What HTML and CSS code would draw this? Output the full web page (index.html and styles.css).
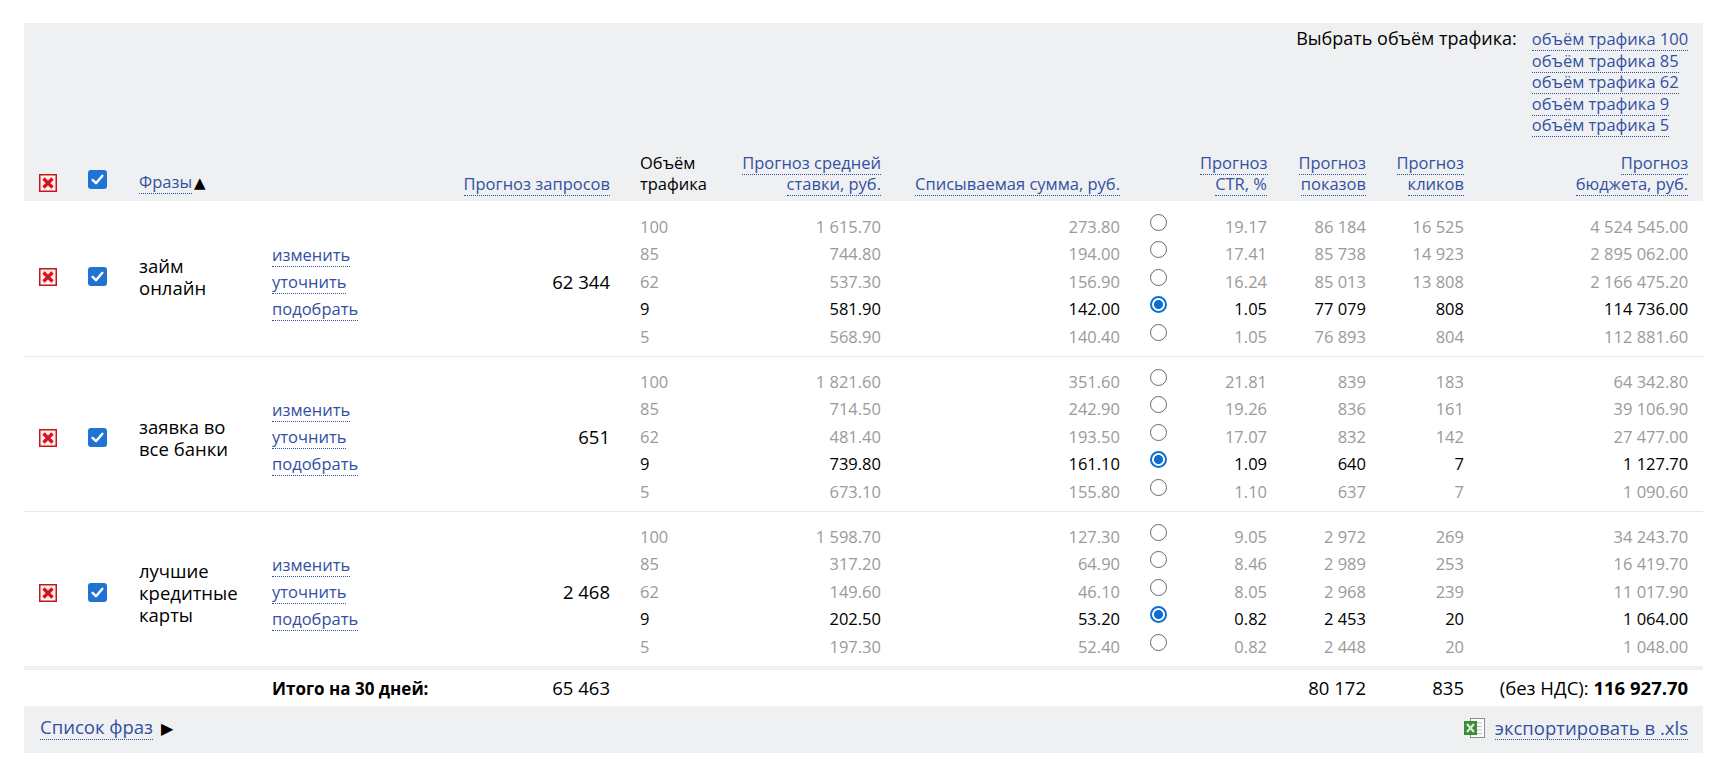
FILE: index.html
```html
<!DOCTYPE html>
<html lang="ru">
<head>
<meta charset="utf-8">
<title>Прогноз бюджета</title>
<link rel="stylesheet" href="styles.css">
</head>
<body>
<div class="wrap">
<table class="fc">
<colgroup>
<col class="w1"><col class="w2"><col class="w3"><col class="w4"><col class="w5"><col class="w6"><col class="w7"><col class="w8"><col class="w9"><col class="w10"><col class="w11"><col class="w12"><col class="w13">
</colgroup>
<thead>
<tr class="top">
<th colspan="13">
<div class="pick">
<span class="pick-label">Выбрать объём трафика:</span>
<div class="pick-list">
<div><a class="dl" href="#">объём трафика 100</a></div>
<div><a class="dl" href="#">объём трафика 85</a></div>
<div><a class="dl" href="#">объём трафика 62</a></div>
<div><a class="dl" href="#">объём трафика 9</a></div>
<div><a class="dl" href="#">объём трафика 5</a></div>
</div>
</div>
</th>
</tr>
<tr class="heads">
<th class="c-x"><svg class="ico-x" viewBox="0 0 18 18" width="18" height="18"><rect x="0.75" y="0.75" width="16.5" height="16.5" fill="#fbeeee" stroke="#c8161d" stroke-width="1.5"/><path d="M4.5 4.5 L13.5 13.5 M13.5 4.5 L4.5 13.5" stroke="#d4141b" stroke-width="3.2"/></svg></th>
<th class="c-cb"><svg class="ico-cb" viewBox="0 0 19 19" width="19" height="19"><rect x="0" y="0" width="19" height="19" rx="3" fill="#1f74d3"/><path d="M4.6 9.9 L8 13.2 L14.4 5.8" fill="none" stroke="#fff" stroke-width="2.4" stroke-linecap="round" stroke-linejoin="round"/></svg></th>
<th class="c-ph"><a class="dl" href="#">Фразы</a><span class="tri">▲</span></th>
<th class="c-ln"></th>
<th class="c-rq"><a class="dl" href="#">Прогноз запросов</a></th>
<th class="c-vol">Объём<br>трафика</th>
<th class="c-bid"><a class="dl" href="#">Прогноз средней<br>ставки, руб.</a></th>
<th class="c-sum"><a class="dl" href="#">Списываемая сумма, руб.</a></th>
<th class="c-rad"></th>
<th class="c-ctr"><a class="dl" href="#">Прогноз<br>CTR, %</a></th>
<th class="c-sh"><a class="dl" href="#">Прогноз<br>показов</a></th>
<th class="c-cl"><a class="dl" href="#">Прогноз<br>кликов</a></th>
<th class="c-bud"><a class="dl" href="#">Прогноз<br>бюджета, руб.</a></th>
</tr>
</thead>
<tbody>
<tr class="r">
<td class="c-x"><svg class="ico-x" viewBox="0 0 18 18" width="18" height="18"><rect x="0.75" y="0.75" width="16.5" height="16.5" fill="#fbeeee" stroke="#c8161d" stroke-width="1.5"/><path d="M4.5 4.5 L13.5 13.5 M13.5 4.5 L4.5 13.5" stroke="#d4141b" stroke-width="3.2"/></svg></td>
<td class="c-cb"><svg class="ico-cb" viewBox="0 0 19 19" width="19" height="19"><rect x="0" y="0" width="19" height="19" rx="3" fill="#1f74d3"/><path d="M4.6 9.9 L8 13.2 L14.4 5.8" fill="none" stroke="#fff" stroke-width="2.4" stroke-linecap="round" stroke-linejoin="round"/></svg></td>
<td class="c-ph">займ<br>онлайн</td>
<td class="c-ln"><div><a class="dl" href="#">изменить</a></div><div><a class="dl" href="#">уточнить</a></div><div><a class="dl" href="#">подобрать</a></div></td>
<td class="c-rq">62&nbsp;344</td>
<td class="c-vol"><div class="v">100</div><div class="v">85</div><div class="v">62</div><div class="v sel">9</div><div class="v">5</div></td>
<td class="c-bid"><div class="v">1&nbsp;615.70</div><div class="v">744.80</div><div class="v">537.30</div><div class="v sel">581.90</div><div class="v">568.90</div></td>
<td class="c-sum"><div class="v">273.80</div><div class="v">194.00</div><div class="v">156.90</div><div class="v sel">142.00</div><div class="v">140.40</div></td>
<td class="c-rad"><div class="rl"><span class="rb"></span></div><div class="rl"><span class="rb"></span></div><div class="rl"><span class="rb"></span></div><div class="rl"><span class="rb on"></span></div><div class="rl"><span class="rb"></span></div></td>
<td class="c-ctr"><div class="v">19.17</div><div class="v">17.41</div><div class="v">16.24</div><div class="v sel">1.05</div><div class="v">1.05</div></td>
<td class="c-sh"><div class="v">86&nbsp;184</div><div class="v">85&nbsp;738</div><div class="v">85&nbsp;013</div><div class="v sel">77&nbsp;079</div><div class="v">76&nbsp;893</div></td>
<td class="c-cl"><div class="v">16&nbsp;525</div><div class="v">14&nbsp;923</div><div class="v">13&nbsp;808</div><div class="v sel">808</div><div class="v">804</div></td>
<td class="c-bud"><div class="v">4&nbsp;524&nbsp;545.00</div><div class="v">2&nbsp;895&nbsp;062.00</div><div class="v">2&nbsp;166&nbsp;475.20</div><div class="v sel">114&nbsp;736.00</div><div class="v">112&nbsp;881.60</div></td>
</tr>
<tr class="r">
<td class="c-x"><svg class="ico-x" viewBox="0 0 18 18" width="18" height="18"><rect x="0.75" y="0.75" width="16.5" height="16.5" fill="#fbeeee" stroke="#c8161d" stroke-width="1.5"/><path d="M4.5 4.5 L13.5 13.5 M13.5 4.5 L4.5 13.5" stroke="#d4141b" stroke-width="3.2"/></svg></td>
<td class="c-cb"><svg class="ico-cb" viewBox="0 0 19 19" width="19" height="19"><rect x="0" y="0" width="19" height="19" rx="3" fill="#1f74d3"/><path d="M4.6 9.9 L8 13.2 L14.4 5.8" fill="none" stroke="#fff" stroke-width="2.4" stroke-linecap="round" stroke-linejoin="round"/></svg></td>
<td class="c-ph">заявка во<br>все банки</td>
<td class="c-ln"><div><a class="dl" href="#">изменить</a></div><div><a class="dl" href="#">уточнить</a></div><div><a class="dl" href="#">подобрать</a></div></td>
<td class="c-rq">651</td>
<td class="c-vol"><div class="v">100</div><div class="v">85</div><div class="v">62</div><div class="v sel">9</div><div class="v">5</div></td>
<td class="c-bid"><div class="v">1&nbsp;821.60</div><div class="v">714.50</div><div class="v">481.40</div><div class="v sel">739.80</div><div class="v">673.10</div></td>
<td class="c-sum"><div class="v">351.60</div><div class="v">242.90</div><div class="v">193.50</div><div class="v sel">161.10</div><div class="v">155.80</div></td>
<td class="c-rad"><div class="rl"><span class="rb"></span></div><div class="rl"><span class="rb"></span></div><div class="rl"><span class="rb"></span></div><div class="rl"><span class="rb on"></span></div><div class="rl"><span class="rb"></span></div></td>
<td class="c-ctr"><div class="v">21.81</div><div class="v">19.26</div><div class="v">17.07</div><div class="v sel">1.09</div><div class="v">1.10</div></td>
<td class="c-sh"><div class="v">839</div><div class="v">836</div><div class="v">832</div><div class="v sel">640</div><div class="v">637</div></td>
<td class="c-cl"><div class="v">183</div><div class="v">161</div><div class="v">142</div><div class="v sel">7</div><div class="v">7</div></td>
<td class="c-bud"><div class="v">64&nbsp;342.80</div><div class="v">39&nbsp;106.90</div><div class="v">27&nbsp;477.00</div><div class="v sel">1&nbsp;127.70</div><div class="v">1&nbsp;090.60</div></td>
</tr>
<tr class="r">
<td class="c-x"><svg class="ico-x" viewBox="0 0 18 18" width="18" height="18"><rect x="0.75" y="0.75" width="16.5" height="16.5" fill="#fbeeee" stroke="#c8161d" stroke-width="1.5"/><path d="M4.5 4.5 L13.5 13.5 M13.5 4.5 L4.5 13.5" stroke="#d4141b" stroke-width="3.2"/></svg></td>
<td class="c-cb"><svg class="ico-cb" viewBox="0 0 19 19" width="19" height="19"><rect x="0" y="0" width="19" height="19" rx="3" fill="#1f74d3"/><path d="M4.6 9.9 L8 13.2 L14.4 5.8" fill="none" stroke="#fff" stroke-width="2.4" stroke-linecap="round" stroke-linejoin="round"/></svg></td>
<td class="c-ph">лучшие<br>кредитные<br>карты</td>
<td class="c-ln"><div><a class="dl" href="#">изменить</a></div><div><a class="dl" href="#">уточнить</a></div><div><a class="dl" href="#">подобрать</a></div></td>
<td class="c-rq">2&nbsp;468</td>
<td class="c-vol"><div class="v">100</div><div class="v">85</div><div class="v">62</div><div class="v sel">9</div><div class="v">5</div></td>
<td class="c-bid"><div class="v">1&nbsp;598.70</div><div class="v">317.20</div><div class="v">149.60</div><div class="v sel">202.50</div><div class="v">197.30</div></td>
<td class="c-sum"><div class="v">127.30</div><div class="v">64.90</div><div class="v">46.10</div><div class="v sel">53.20</div><div class="v">52.40</div></td>
<td class="c-rad"><div class="rl"><span class="rb"></span></div><div class="rl"><span class="rb"></span></div><div class="rl"><span class="rb"></span></div><div class="rl"><span class="rb on"></span></div><div class="rl"><span class="rb"></span></div></td>
<td class="c-ctr"><div class="v">9.05</div><div class="v">8.46</div><div class="v">8.05</div><div class="v sel">0.82</div><div class="v">0.82</div></td>
<td class="c-sh"><div class="v">2&nbsp;972</div><div class="v">2&nbsp;989</div><div class="v">2&nbsp;968</div><div class="v sel">2&nbsp;453</div><div class="v">2&nbsp;448</div></td>
<td class="c-cl"><div class="v">269</div><div class="v">253</div><div class="v">239</div><div class="v sel">20</div><div class="v">20</div></td>
<td class="c-bud"><div class="v">34&nbsp;243.70</div><div class="v">16&nbsp;419.70</div><div class="v">11&nbsp;017.90</div><div class="v sel">1&nbsp;064.00</div><div class="v">1&nbsp;048.00</div></td>
</tr>
<tr class="total">
<td></td><td></td><td></td>
<td class="c-ln"><b class="tot-label">Итого на 30 дней:</b></td>
<td class="c-rq">65&nbsp;463</td>
<td></td><td></td><td></td><td></td><td></td>
<td class="c-sh">80&nbsp;172</td>
<td class="c-cl">835</td>
<td class="c-bud">(без НДС): <b class="tot-sum">116&nbsp;927.70</b></td>
</tr>
</tbody>
</table>
<div class="foot">
<div class="list"><a class="dl" href="#">Список фраз</a><span class="tri">▶</span></div>
<div class="xls">
<svg class="ico-xls" viewBox="0 0 21 20" width="21" height="20"><rect x="6.5" y="0.5" width="14" height="19" fill="#fff" stroke="#8a8f8a"/><path d="M10 5h8M10 8.5h8M10 12h8M10 15.5h8" stroke="#bccabc" stroke-width="1"/><rect x="0" y="3" width="13" height="14" fill="#3d8c3d"/><path d="M3 6 L10 14 M10 6 L3 14" stroke="#d8efcf" stroke-width="2.2"/></svg>
<a class="dl" href="#">экспортировать в .xls</a>
</div>
</div>
</div>
</body>
</html>
```

FILE: styles.css
```css
body {
  margin: 0;
  background: #fff;
  color: #000;
  font-family: "Open Sans", "Noto Sans", sans-serif;
  font-size: 16.5px;
}

.wrap {
  padding: 23px 24px;
}

a.dl {
  color: #3350a2;
  text-decoration: none;
  border-bottom: 1px dotted #3350a2;
}

.tri {
  font-family: "DejaVu Sans", sans-serif;
  font-size: 15px;
  margin-left: 2px;
}

table.fc {
  width: 1679px;
  table-layout: fixed;
  border-collapse: collapse;
}

.w1 { width: 49px; }
.w2 { width: 52px; }
.w3 { width: 147px; }
.w4 { width: 168px; }
.w5 { width: 170px; }
.w6 { width: 105px; }
.w7 { width: 166px; }
.w8 { width: 239px; }
.w9 { width: 80px; }
.w10 { width: 67px; }
.w11 { width: 99px; }
.w12 { width: 98px; }
.w13 { width: 239px; }

th, td {
  padding: 0;
  font-weight: normal;
  text-align: left;
  vertical-align: top;
}

thead {
  background: #eff0f2;
}

tr.top th {
  padding: 5px 15px 0 0;
}

.pick {
  display: flex;
  justify-content: flex-end;
  gap: 15px;
  line-height: 21.5px;
}

.pick-label {
  font-size: 18px;
}

.pick-list {
  display: flex;
  flex-direction: column;
  align-items: flex-start;
}

tr.heads th {
  padding-top: 16px;
  padding-bottom: 6px;
  vertical-align: bottom;
  line-height: 21.5px;
}

svg { display: block; }

tr.heads th.c-x { padding-bottom: 9px; }
tr.heads th.c-cb { padding-bottom: 12px; }

.c-x { padding-left: 15px; }
.c-cb { padding-left: 15px; }
.c-ph { padding-left: 14px; white-space: nowrap; }
.c-rq, .c-bid, .c-sum, .c-ctr, .c-sh, .c-cl, .c-bud { text-align: right; }
th.c-rq, th.c-bid, th.c-sum, th.c-ctr, th.c-sh, th.c-cl, th.c-bud { text-align: right; }
.c-vol { padding-left: 30px; }
.c-rad { padding-left: 30px; }
.c-bud { padding-right: 15px; }

tr.r td {
  padding-top: 12px;
  padding-bottom: 5.5px;
  white-space: nowrap;
}

tr.r + tr.r td {
  border-top: 1px solid #e7e8ea;
  padding-top: 11px;
}

tr.r td.c-x,
tr.r td.c-cb,
tr.r td.c-ph {
  padding-top: 0;
  padding-bottom: 3px;
  vertical-align: middle;
}

tr.r td.c-ph {
  font-size: 18.5px;
  line-height: 22px;
}

tr.r td.c-ln,
tr.r td.c-rq {
  vertical-align: middle;
}

tr.r td.c-rq {
  font-size: 18.5px;
}

.c-ln div {
  line-height: 27px;
}

.v {
  height: 27.5px;
  line-height: 27.5px;
  color: #9a9a9a;
}

.v.sel {
  color: #000;
}

.rl {
  height: 27.5px;
  padding-top: 1px;
  box-sizing: border-box;
}

.rb {
  display: block;
  width: 17px;
  height: 17px;
  box-sizing: border-box;
  border: 1px solid #676767;
  border-radius: 50%;
  background: #fff;
}

.rb.on {
  border: 2px solid #0e6fd2;
  background: radial-gradient(circle, #0e6fd2 0 4.2px, #fff 4.8px);
}

tr.total td {
  border-top: 4px solid #eff0f2;
  padding-top: 6px;
  padding-bottom: 6px;
  font-size: 18.5px;
  line-height: 23.5px;
  vertical-align: middle;
  white-space: nowrap;
}

.tot-label {
  font-size: 17px;
}

.foot {
  width: 1679px;
  height: 47px;
  box-sizing: border-box;
  padding: 0 15px 4px 16px;
  background: #eff0f2;
  display: flex;
  justify-content: space-between;
  align-items: center;
  font-size: 18.5px;
  line-height: 23px;
}

.foot .tri {
  font-size: 16px;
  margin-left: 8px;
}

.xls {
  display: flex;
  align-items: center;
  gap: 10px;
}
```
